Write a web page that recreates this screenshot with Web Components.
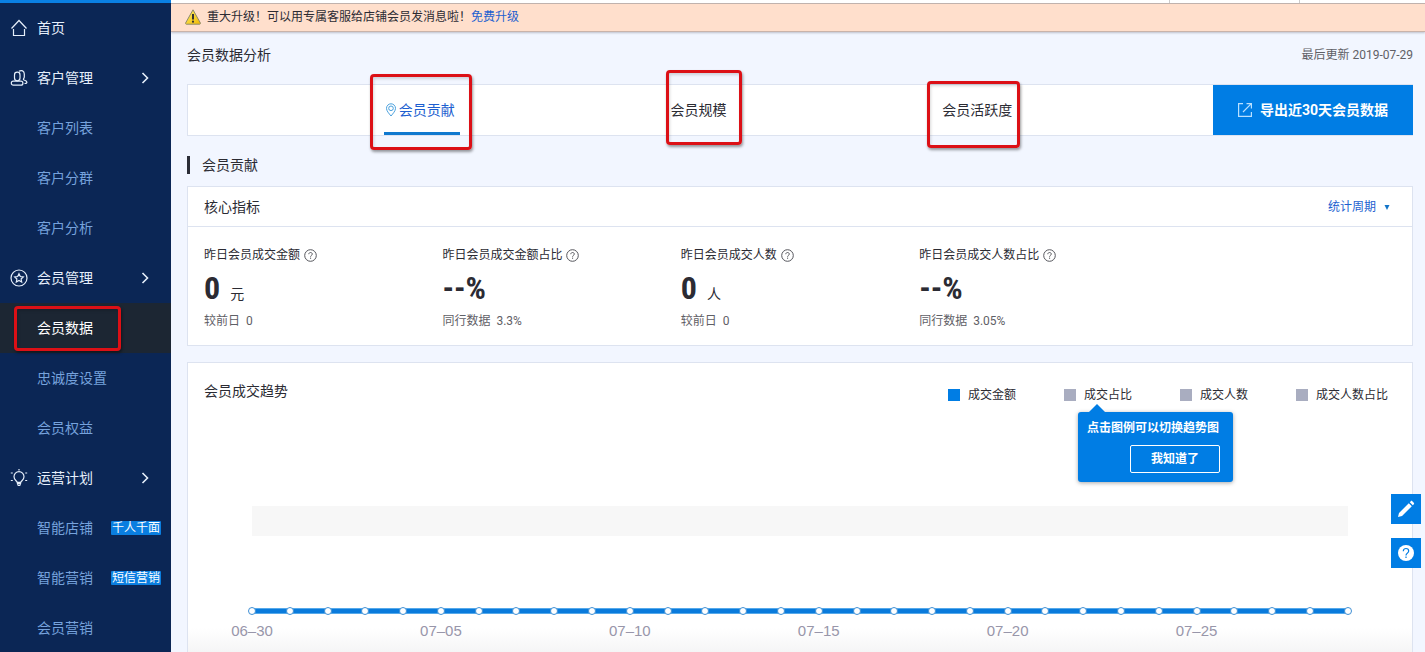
<!DOCTYPE html>
<html lang="zh-CN">
<head>
<meta charset="utf-8">
<meta name="viewport" content="width=device-width, initial-scale=1">
<title>会员数据分析</title>
<style>
  :root {
    --blue: #007de4;
    --link: #1d5fd0;
    --line: #dde3f0;
    --ink: #2b2b33;
  }
  html, body { margin: 0; height: 100%; }
  body {
    font: 14px/20px Roboto, "Noto Sans CJK SC", sans-serif;
    color: var(--ink);
    background: #f2f6ff;
  }
</style>
</head>
<body>
<member-app></member-app>
<script>
  function define(name, html, setup) {
    const template = document.createElement('template');
    template.innerHTML = `<style>
      *, *::before, *::after { box-sizing: border-box; }
      button, select { font: inherit; color: inherit; margin: 0; }
      a { color: inherit; text-decoration: none; }
      svg { display: block; flex: none; }
    </style>` + html;
    customElements.define(name, class extends HTMLElement {
      constructor() {
        super();
        this.attachShadow({ mode: 'open' }).append(template.content.cloneNode(true));
      }
      connectedCallback() {
        if (setup && !this.ready) { this.ready = true; setup(this, this.shadowRoot); }
      }
    });
  }

  /* Red annotation frame laid over the element it marks */
  define('mark-frame', `
    <style>
      :host {
        position: absolute; z-index: 3; box-sizing: border-box; pointer-events: none;
        border: 3px solid #dc1016; border-radius: 4px;
        box-shadow: 1px 2px 3px rgba(0,0,0,.4), inset 1px 2px 3px rgba(0,0,0,.15);
      }
    </style>`);

  const ICONS = {
    home: '<path d="M1.5 9.5 9 1.500l7.500 8M3.500 10v6.500h11V10"/>',
    users: '<rect x="4.500" y="3.200" width="5.500" height="8.600" rx="2.700"/><rect x="1.300" y="12.200" width="11.600" height="4" rx="2"/><path d="M9 2.200c2.600-1.500 5.300-.3 5.300 2.800v3c0 1.200-.9 1.600-.9 2.500 0 .8 3.500.9 3.500 2.700 0 1-.9 1.300-2.400 1.300"/>',
    star: '<circle cx="9" cy="9" r="8"/><path d="m9 4.700 1.300 2.800 3 .4-2.200 2.100.6 3L9 11.500l-2.700 1.500.6-3-2.200-2.100 3-.4z"/>',
    bulb: '<path d="M7.200 13.400c-.3-1.500-3.200-2.600-3.200-5.700a5 5 0 0 1 10 0c0 3.100-2.900 4.200-3.200 5.700zM7.500 14.500h3L9.800 16.500H8.200zM9 0v1.500M.8 4h2M15.200 4h2M.8 11.500h2M15.200 11.500h2"/>'
  };

  define('nav-item', `
    <style>
      :host { display: block; position: relative; height: 50px; color: #76a2dc; }
      :host([icon]) { color: #e6effb; }
      :host([active]) { background: #1c2633; color: #fff; }
      a { display: flex; align-items: center; height: 50px; padding: 0 10px 0 37px; }
      :host([icon]) a { padding-left: 10px; gap: 9px; }
      .text { flex: 1; }
      .icon { fill: none; stroke: currentColor; stroke-width: 1.2; }
      .arrow { fill: none; stroke: currentColor; stroke-width: 1.6; margin-right: 12px; }
      .tag { background: #0a7ee0; color: #fff; font-size: 12px; line-height: 14px; padding: 0 1px; border-radius: 1px; }
    </style>
    <a href="#"><span class="text"><slot></slot></span></a>
    <slot name="mark"></slot>`,
    (host, root) => {
      const link = root.querySelector('a');
      const icon = host.getAttribute('icon');
      if (icon) link.insertAdjacentHTML('afterbegin', `<svg class="icon" width="18" height="18" viewBox="0 0 18 18" aria-hidden="true">${ICONS[icon]}</svg>`);
      if (host.hasAttribute('group')) link.insertAdjacentHTML('beforeend', '<svg class="arrow" width="8" height="12" viewBox="0 0 8 12" aria-hidden="true"><path d="m1.500 1 5 5-5 5"/></svg>');
      if (host.hasAttribute('tag')) {
        const tag = document.createElement('span');
        tag.className = 'tag';
        tag.textContent = host.getAttribute('tag');
        link.append(tag);
      }
      if (host.hasAttribute('active')) link.setAttribute('aria-current', 'page');
    });

  define('side-nav', `
    <style>
      :host { display: block; background: #0b2655; border-top: 3px solid #0a80e4; overflow: hidden auto; scrollbar-width: none; }
      mark-frame { left: 14px; top: 3px; width: 107px; height: 45px; }
    </style>
    <nav aria-label="主导航">
      <nav-item icon="home">首页</nav-item>
      <nav-item icon="users" group>客户管理</nav-item>
      <nav-item>客户列表</nav-item>
      <nav-item>客户分群</nav-item>
      <nav-item>客户分析</nav-item>
      <nav-item icon="star" group>会员管理</nav-item>
      <nav-item active>会员数据<mark-frame slot="mark"></mark-frame></nav-item>
      <nav-item>忠诚度设置</nav-item>
      <nav-item>会员权益</nav-item>
      <nav-item icon="bulb" group>运营计划</nav-item>
      <nav-item tag="千人千面">智能店铺</nav-item>
      <nav-item tag="短信营销">智能营销</nav-item>
      <nav-item>会员营销</nav-item>
    </nav>`);

  define('notice-bar', `
    <style>
      :host { display: block; font-size: 12px; }
      .strip { display: flex; justify-content: flex-end; height: 4px; background: #fff; border-bottom: 1px solid #c3b5b0; }
      .strip i { width: 130px; border-left: 1px solid #ccc; }
      .bar { display: flex; align-items: center; gap: 6px; height: 28px; padding: 0 14px 2px; background: #ffdfcc; border-bottom: 1px solid #c9b3aa; box-shadow: 0 1px 2px rgba(90,90,110,.35); position: relative; }
      .strip i:last-child { width: 126px; }
      a { color: var(--link); }
    </style>
    <div class="strip"><i></i><i></i></div>
    <div class="bar" role="status">
      <svg width="16" height="16" viewBox="0 0 16 16" aria-hidden="true">
        <defs><linearGradient id="g" x2="1" y2="1"><stop stop-color="#fff06a"/><stop offset="1" stop-color="#f0b800"/></linearGradient></defs>
        <path d="M8 .8 15.400 14a.8.8 0 0 1-.7 1.200H1.300A.8.8 0 0 1 .6 14z" fill="url(#g)" stroke="#8d8a6c"/>
        <path d="M8 5v5.500" stroke="#333" stroke-width="2"/><circle cx="8" cy="12.700" r="1.100" fill="#333"/>
      </svg>
      <span>重大升级！可以用专属客服给店铺会员发消息啦！<a href="#">免费升级</a></span>
    </div>`);

  define('page-header', `
    <style>
      :host { display: flex; justify-content: space-between; align-items: center; height: 46px; margin-bottom: 6px; }
      h1 { margin: 0; font-size: 14px; font-weight: 400; }
      span { font-size: 12px; color: #5f6066; }
    </style>
    <h1>会员数据分析</h1><span>最后更新 2019-07-29</span>`);

  define('tab-item', `
    <style>
      :host { display: block; position: relative; }
      button { display: flex; align-items: center; gap: 3px; height: 50px; padding: 0 5px 0 2px; border: 0; background: none; cursor: pointer; }
      svg { visibility: hidden; fill: none; stroke: #4aa0dd; }
      :host([selected]) svg { visibility: visible; }
      :host([selected]) button { color: var(--link); box-shadow: inset 0 -3px #1079cf; }
    </style>
    <button type="button" role="tab">
      <svg width="10" height="14" viewBox="0 0 10 14" aria-hidden="true"><path d="M5 13C3 10.500.5 8 .5 5.300a4.500 4.500 0 0 1 9 0C9.500 8 7 10.500 5 13z"/><circle cx="5" cy="5.300" r="2.300"/></svg>
      <slot></slot>
    </button>
    <slot name="mark"></slot>`,
    (host, root) => root.querySelector('button').setAttribute('aria-selected', host.hasAttribute('selected')));

  define('tab-bar', `
    <style>
      :host { display: flex; background: #fff; border: 1px solid var(--line); border-right: 0; }
      .tabs { flex: 1; display: flex; justify-content: space-evenly; }
      .export { display: flex; align-items: center; justify-content: center; gap: 8px; width: 200px; height: 50px; border: 0; padding: 0; background: var(--blue); color: #fff; font-weight: 700; cursor: pointer; }
      .export svg { fill: none; stroke: #b9e0ff; stroke-width: 1.2; }
      .one { left: -14px; top: -11px; width: 102px; height: 76px; }
      .two { left: 10px; top: -15px; width: 76px; height: 75px; }
      .three { left: 0; top: -4px; width: 93px; height: 67px; }
    </style>
    <div class="tabs" role="tablist">
      <tab-item selected>会员贡献<mark-frame slot="mark" class="one"></mark-frame></tab-item>
      <tab-item>会员规模<mark-frame slot="mark" class="two"></mark-frame></tab-item>
      <tab-item>会员活跃度<mark-frame slot="mark" class="three"></mark-frame></tab-item>
    </div>
    <button type="button" class="export">
      <svg width="14" height="14" viewBox="0 0 14 14" aria-hidden="true"><path d="M5 .6H.6v12.800h12.800V9M5 9l8.300-8.300M8.500.6h4.900v4.900"/></svg>
      导出近30天会员数据
    </button>`);

  define('section-title', `
    <style>
      :host { display: flex; align-items: center; margin: 20px 0 12px; height: 18px; border-left: 3px solid #2b2d36; padding-left: 12px; }
      h2 { margin: 0; font-size: 14px; font-weight: 400; }
    </style>
    <h2><slot></slot></h2>`);

  define('metric-item', `
    <style>
      :host { display: block; font-size: 12px; }
      .label { display: flex; align-items: center; gap: 4px; }
      .label svg { fill: none; stroke: #55565c; }
      .value { display: flex; align-items: baseline; gap: 10px; height: 32px; margin: 7px 0; font-size: 14px; line-height: 32px; }
      .value b { font-family: "Liberation Sans Narrow", "Roboto Condensed", "Liberation Sans", sans-serif; font-size: 32px; }
      .sub { color: #5f6066; display: flex; gap: 6px; }
    </style>
    <div class="label"><slot></slot>
      <svg width="13" height="13" viewBox="0 0 13 13" aria-hidden="true"><circle cx="6.500" cy="6.500" r="5.800"/><path d="M4.800 5.200c0-2.300 3.500-2.200 3.500-.1 0 1.200-1.700 1.300-1.700 2.600M6.600 8.600v1.200"/></svg>
    </div>
    <div class="value"><b></b><span class="unit"></span></div>
    <div class="sub"><span class="name"></span><span class="num"></span></div>`,
    (host, root) => {
      root.querySelector('b').textContent = host.getAttribute('value');
      root.querySelector('.unit').textContent = host.getAttribute('unit') || '';
      root.querySelector('.name').textContent = host.getAttribute('compare');
      root.querySelector('.num').textContent = host.getAttribute('base');
    });

  define('core-metrics', `
    <style>
      :host { display: block; background: #fff; border: 1px solid var(--line); }
      header { display: flex; justify-content: space-between; align-items: center; height: 40px; padding: 0 22px 0 16px; border-bottom: 1px solid var(--line); }
      h3 { margin: 0; font-size: 14px; font-weight: 400; }
      .period { display: flex; align-items: center; gap: 7px; color: var(--link); font-size: 12px; }
      select { appearance: none; border: 0; padding: 0; background: none; line-height: 20px; }
      .grid { display: grid; grid-template-columns: repeat(5, 1fr); padding: 18px 16px 14px; }
    </style>
    <header><h3>核心指标</h3>
      <label class="period"><select aria-label="统计周期"><option>统计周期</option></select>
        <svg width="6" height="6" viewBox="0 0 6 6" aria-hidden="true"><path d="M.5 1h5L3 6z" fill="#1274c8"/></svg></label>
    </header>
    <div class="grid">
      <metric-item value="0" unit="元" compare="较前日" base="0">昨日会员成交金额</metric-item>
      <metric-item value="--%" compare="同行数据" base="3.3%">昨日会员成交金额占比</metric-item>
      <metric-item value="0" unit="人" compare="较前日" base="0">昨日会员成交人数</metric-item>
      <metric-item value="--%" compare="同行数据" base="3.05%">昨日会员成交人数占比</metric-item>
    </div>`);

  define('legend-item', `
    <style>
      :host { display: block; position: relative; min-width: 116px; font-size: 12px; }
      :host(:last-of-type) { min-width: 0; }
      button { display: flex; align-items: center; gap: 8px; height: 26px; border: 0; padding: 0; background: none; cursor: pointer; }
      i { width: 12px; height: 12px; background: #a9adc0; }
      :host([on]) i { background: var(--blue); }
    </style>
    <button type="button"><i></i><slot></slot></button>
    <slot name="tip"></slot>`,
    (host, root) => root.querySelector('button').setAttribute('aria-pressed', host.hasAttribute('on')));

  define('guide-tip', `
    <style>
      :host { position: absolute; z-index: 2; top: 30px; left: 14px; display: flex; flex-direction: column; align-items: flex-end; gap: 7px; width: 155px; padding: 6px 13px 9px 9px; background: var(--blue); color: #fff; border-radius: 3px; font-weight: 700; box-shadow: 0 1px 4px rgba(0,0,0,.35); }
      :host::before { content: ""; position: absolute; top: -8px; left: 11px; border: 8px solid transparent; border-top: 0; border-bottom-color: var(--blue); }
      span { align-self: flex-start; white-space: nowrap; }
      button { width: 90px; height: 28px; padding: 0; border: 1px solid #fff; border-radius: 2px; background: none; font-weight: 700; cursor: pointer; }
    </style>
    <span>点击图例可以切换趋势图</span>
    <button type="button">我知道了</button>`);

  define('trend-axis', `
    <style>
      :host { display: block; font: 15px/20px "Liberation Sans", sans-serif; color: #9896aa; }
      .ticks { display: flex; justify-content: space-between; height: 34px; background: linear-gradient(#56a9ea 0 6px) 0 1px / 100% 6px no-repeat; position: relative; }
      .ticks::before { content: ""; position: absolute; inset: 2px 0 auto; height: 4px; background: #0a7bdc; }
      .tick { position: relative; width: 0; display: flex; flex-direction: column; align-items: center; gap: 6px; white-space: nowrap; }
      i { flex: none; width: 8px; height: 8px; border: 1px solid #3f8fd4; border-radius: 50%; background: #fff; }
    </style>
    <div class="ticks"></div>`,
    (host, root) => {
      const box = root.querySelector('.ticks');
      const start = Date.UTC(2019, 5, 30);
      for (let day = 0; day < 30; day++) {
        const tick = document.createElement('div');
        tick.className = 'tick';
        tick.append(document.createElement('i'));
        if (day % 5 === 0 && day < 29) {
          const label = document.createElement('span');
          label.textContent = new Date(start + day * 864e5).toISOString().slice(5, 10).replace('-', '–');
          tick.append(label);
        }
        box.append(tick);
      }
    });

  define('trend-panel', `
    <style>
      :host { display: block; background: linear-gradient(to top, #f5f5f6, #fff 24px); border: 1px solid var(--line); border-bottom: 0; }
      header { display: flex; justify-content: space-between; padding: 18px 24px 0 16px; }
      h3 { margin: 0; font-size: 14px; font-weight: 400; }
      .legend { display: flex; padding-top: 1px; }
      .plot { padding: 98px 64px 0; }
      .band { height: 30px; margin-bottom: 71px; background: #f7f7f7; }
    </style>
    <header><h3>会员成交趋势</h3>
      <div class="legend">
        <legend-item on>成交金额</legend-item>
        <legend-item>成交占比<guide-tip slot="tip"></guide-tip></legend-item>
        <legend-item>成交人数</legend-item>
        <legend-item>成交人数占比</legend-item>
      </div>
    </header>
    <div class="plot"><div class="band"></div><trend-axis></trend-axis></div>`);

  define('float-tools', `
    <style>
      :host { position: fixed; z-index: 4; right: 4px; bottom: 84px; display: grid; gap: 14px; }
      button { display: grid; place-items: center; width: 30px; height: 30px; border: 0; padding: 0; background: var(--blue); cursor: pointer; }
    </style>
    <button type="button" aria-label="反馈"><svg width="18" height="18" viewBox="0 0 18 18" fill="#fff" aria-hidden="true"><path d="M1 17 2 13 11.800 3.200l3 3L5 16zM12.800 2.200l1-1c.5-.5 1-.5 1.500 0l1.500 1.500c.5.500.5 1 0 1.500l-1 1z"/></svg></button>
    <button type="button" aria-label="帮助"><svg width="18" height="18" viewBox="0 0 18 18" aria-hidden="true"><circle cx="9" cy="9" r="8" fill="#fff"/><path d="M6.300 7.300c0-3.800 5.400-3.600 5.400-.2 0 1.900-2.700 2.200-2.700 4.300M9 12.500V14" fill="none" stroke="#007de4" stroke-width="1.200"/></svg></button>`);

  define('member-app', `
    <style>
      :host { display: grid; grid-template-columns: 171px minmax(0, 1fr); height: 100vh; overflow: hidden; }
      .page { display: flex; flex-direction: column; min-height: 0; overflow: hidden; }
      main { flex: 1; display: flex; flex-direction: column; padding: 0 12px 0 16px; }
      trend-panel { flex: 1; margin-top: 16px; }
    </style>
    <side-nav></side-nav>
    <div class="page">
      <notice-bar></notice-bar>
      <main>
        <page-header></page-header>
        <tab-bar></tab-bar>
        <section-title>会员贡献</section-title>
        <core-metrics></core-metrics>
        <trend-panel></trend-panel>
      </main>
    </div>
    <float-tools></float-tools>`);
</script>
</body>
</html>
